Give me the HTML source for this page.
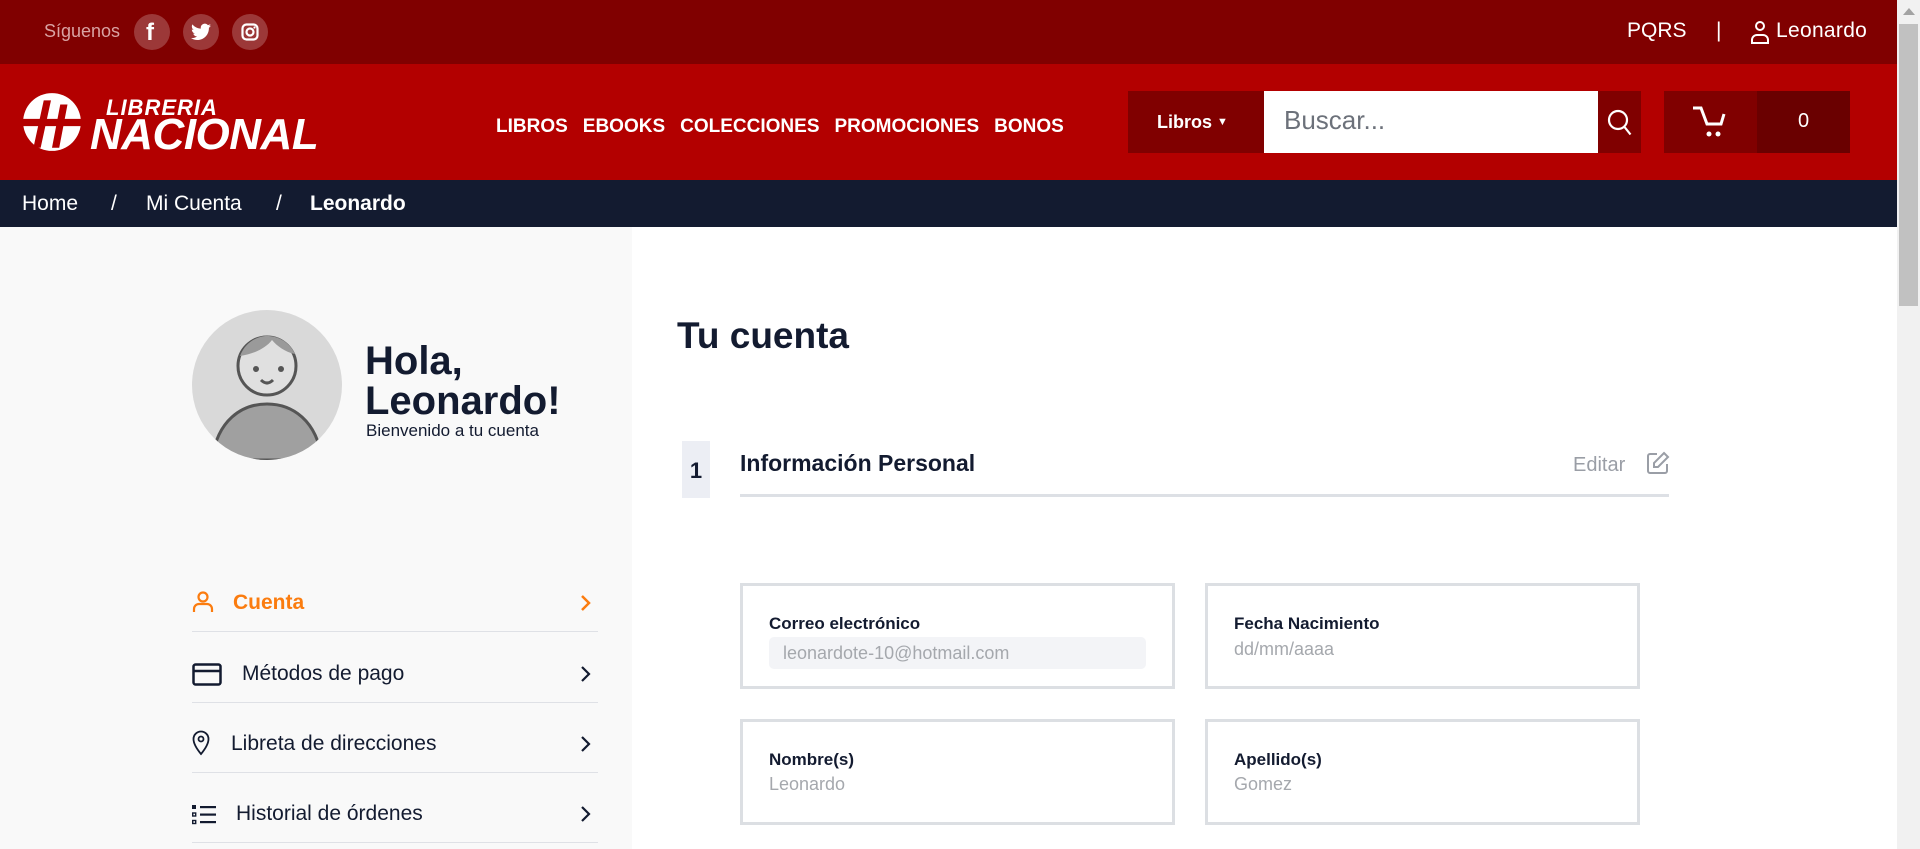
<!DOCTYPE html>
<html><head><meta charset="utf-8"><style>
*{margin:0;padding:0;box-sizing:border-box}
body{width:1920px;height:849px;overflow:hidden;font-family:"Liberation Sans",sans-serif;background:#fff;position:relative;color:#131b30}
.a{position:absolute}
.top{left:0;top:0;width:1897px;height:64px;background:#800000}
.hdr{left:0;top:64px;width:1897px;height:116px;background:#b30000}
.bc{left:0;top:180px;width:1897px;height:47px;background:#131b30;color:#fff;font-size:20px}
.side{left:0;top:227px;width:632px;height:622px;background:#f9f9f9}
.soc{width:36px;height:36px;border-radius:50%;background:rgba(255,255,255,.22);top:14px}
.nav{top:116px;left:496px;color:#fff;font-weight:bold;font-size:19px;white-space:nowrap;letter-spacing:0px}
.nav span{margin-right:15px}
.menu{left:192px;width:406px;height:71px;border-bottom:1.5px solid #dfe1e6;font-size:21px}
.menu .t{position:absolute;top:30px}
.chev{position:absolute;right:6px;top:33px}
.box{border:3px solid #dcdfe3;width:435px;height:106px;background:#fff}
.lbl{position:absolute;left:26px;top:28px;font-size:17px;font-weight:bold;color:#131b30}
.val{position:absolute;left:26px;top:56px;font-size:18px;color:#a5a8ad}
</style></head><body>
<div class="a top"></div>
<div class="a" style="left:44px;top:21px;color:#d9a3a3;font-size:18px">Síguenos</div>
<div class="a soc" style="left:134px"><div class="a" style="left:12px;top:5px;color:#fff;font-weight:bold;font-size:24px">f</div></div>
<div class="a soc" style="left:183px"><svg class="a" style="left:8px;top:9px" width="20" height="18" viewBox="0 0 24 20"><path fill="#fff" d="M24 2.4c-.9.4-1.8.6-2.8.8 1-.6 1.8-1.6 2.200-2.7-1 .6-2 1-3.1 1.2C19.3.7 18 0 16.6 0c-2.7 0-4.9 2.2-4.9 4.9 0 .4 0 .8.1 1.1C7.7 5.8 4.1 3.9 1.7.9c-.4.7-.7 1.6-.7 2.5 0 1.7.9 3.2 2.2 4.1-.8 0-1.6-.2-2.2-.6v.1c0 2.4 1.7 4.4 3.9 4.8-.4.1-.8.2-1.3.2-.3 0-.6 0-.9-.1.6 2 2.4 3.4 4.6 3.4-1.7 1.3-3.8 2.1-6.1 2.1H0c2.2 1.4 4.8 2.2 7.5 2.2 9.1 0 14-7.5 14-14v-.6c1-.7 1.8-1.6 2.5-2.6z"/></svg></div>
<div class="a soc" style="left:232px"><svg class="a" style="left:9px;top:9px" width="18" height="18" viewBox="0 0 18 18"><rect x="1.5" y="1.5" width="15" height="15" rx="4" fill="none" stroke="#fff" stroke-width="2.2"/><circle cx="9" cy="9" r="3.5" fill="none" stroke="#fff" stroke-width="2.2"/><circle cx="13.5" cy="4.5" r="1.1" fill="#fff"/></svg></div>
<div class="a" style="left:1627px;top:19px;color:#fff;font-size:21px">PQRS</div>
<div class="a" style="left:1716px;top:19px;color:#fff;font-size:21px">|</div>
<svg class="a" style="left:1748px;top:19px" width="24" height="26" viewBox="0 0 24 26" fill="none" stroke="#fff" stroke-width="2"><circle cx="12" cy="7" r="4"/><path d="M4 24v-3a5 5 0 0 1 5-5h6a5 5 0 0 1 5 5v3z"/></svg>
<div class="a" style="left:1776px;top:19px;color:#fff;font-size:21px;letter-spacing:0.3px">Leonardo</div>

<div class="a hdr"></div>
<svg class="a" style="left:20px;top:90px" width="64" height="64" viewBox="0 0 60 62"><circle cx="30" cy="31" r="28" fill="#fff"/><path d="M0 28h60v7H0z" fill="#b30000"/><path d="M22 10l-10 46h7l10-46zM38 14l-8 42h7l8-42z" fill="#b30000"/></svg>
<div class="a" style="left:106px;top:95px;color:#fff;font-weight:bold;font-style:italic;font-size:22px;letter-spacing:1px">LIBRERIA</div>
<div class="a" style="left:90px;top:110px;color:#fff;font-weight:bold;font-style:italic;font-size:44px;letter-spacing:-0.5px">NACIONAL</div>
<div class="a nav"><span>LIBROS</span><span>EBOOKS</span><span>COLECCIONES</span><span>PROMOCIONES</span><span style="margin:0">BONOS</span></div>
<div class="a" style="left:1128px;top:91px;width:136px;height:62px;background:#800000;color:#fff;font-weight:bold;font-size:18px;padding:21px 0 0 29px">Libros <span style="font-size:11px;vertical-align:3px">▼</span></div>
<div class="a" style="left:1264px;top:91px;width:334px;height:62px;background:#fff;color:#6c717a;font-size:26px;padding:14px 0 0 20px">Buscar...</div>
<div class="a" style="left:1598px;top:91px;width:43px;height:62px;background:#800000"><svg class="a" style="left:9px;top:18px" width="26" height="28" viewBox="0 0 26 28" fill="none" stroke="#fff" stroke-width="2.2"><circle cx="11" cy="11" r="9"/><path d="M17.5 18l6 7.5"/></svg></div>
<div class="a" style="left:1664px;top:91px;width:93px;height:62px;background:#800000"><svg class="a" style="left:27px;top:14px" width="40" height="34" viewBox="0 0 40 34" fill="none" stroke="#fff" stroke-width="3"><path d="M2 3h8l6 16h14l3-10"/><circle cx="18" cy="29" r="2.5" fill="#fff" stroke="none"/><circle cx="27" cy="29" r="2.5" fill="#fff" stroke="none"/></svg></div>
<div class="a" style="left:1757px;top:91px;width:93px;height:62px;background:#6a0000;color:#fff;font-size:20px;text-align:center;padding-top:19px">0</div>

<div class="a bc"></div>
<div class="a" style="left:22px;top:192px;color:#fff;font-size:21px">Home</div>
<div class="a" style="left:111px;top:192px;color:#fff;font-size:21px">/</div>
<div class="a" style="left:146px;top:192px;color:#fff;font-size:21px">Mi Cuenta</div>
<div class="a" style="left:276px;top:192px;color:#fff;font-size:21px">/</div>
<div class="a" style="left:310px;top:192px;color:#fff;font-size:21px;font-weight:bold">Leonardo</div>

<div class="a side"></div>
<svg class="a" style="left:192px;top:310px" width="150" height="150" viewBox="0 0 150 150"><defs><clipPath id="c"><circle cx="75" cy="75" r="75"/></clipPath></defs><circle cx="75" cy="75" r="75" fill="#d9d9d9"/><g clip-path="url(#c)"><path d="M20 150c5-40 30-56 55-56s50 16 55 56z" fill="#a0a0a0" stroke="#555" stroke-width="3"/><circle cx="75" cy="56" r="29" fill="#e0e0e0" stroke="#555" stroke-width="3"/><path d="M48 46c6-16 20-20 27-20 10 0 22 5 28 18-10-2-18-8-23-14-6 8-18 14-32 16z" fill="#9a9a9a"/><circle cx="64" cy="59" r="3" fill="#555"/><circle cx="89" cy="59" r="3" fill="#555"/><path d="M69 70q6 6 12 0" fill="none" stroke="#555" stroke-width="3"/></g></svg>
<div class="a" style="left:365px;top:341px;font-size:40px;font-weight:bold;line-height:40px">Hola,<br>Leonardo!</div>
<div class="a" style="left:366px;top:421px;font-size:17px">Bienvenido a tu cuenta</div>

<div class="a menu" style="top:561px;color:#fb7c0f"><svg class="a" style="left:0;top:30px" width="22" height="22" viewBox="0 0 22 22" fill="none" stroke="#fb7c0f" stroke-width="2.2"><circle cx="11" cy="6" r="4.5"/><path d="M2 21v-3a5 5 0 0 1 5-5h8a5 5 0 0 1 5 5v3"/></svg><span class="t" style="left:41px;font-weight:bold">Cuenta</span><svg class="chev" width="12" height="18" viewBox="0 0 12 18" fill="none" stroke="#fb7c0f" stroke-width="2.5"><path d="M2 2l7 7-7 7"/></svg></div>
<div class="a menu" style="top:632px"><svg class="a" style="left:0;top:31px" width="30" height="23" viewBox="0 0 30 23" fill="none" stroke="#131b30" stroke-width="2.5"><rect x="1.5" y="1.5" width="27" height="20" rx="2"/><path d="M1.5 8h27"/></svg><span class="t" style="left:50px">Métodos de pago</span><svg class="chev" width="12" height="18" viewBox="0 0 12 18" fill="none" stroke="#131b30" stroke-width="2.2"><path d="M2 2l7 7-7 7"/></svg></div>
<div class="a menu" style="top:702px"><svg class="a" style="left:0;top:28px" width="18" height="26" viewBox="0 0 18 26" fill="none" stroke="#131b30" stroke-width="1.8"><path d="M9 24C4 18 1.5 13 1.5 9a7.5 7.5 0 0 1 15 0c0 4-2.5 9-7.5 15z"/><circle cx="9" cy="9" r="2.5"/></svg><span class="t" style="left:39px">Libreta de direcciones</span><svg class="chev" width="12" height="18" viewBox="0 0 12 18" fill="none" stroke="#131b30" stroke-width="2.2"><path d="M2 2l7 7-7 7"/></svg></div>
<div class="a menu" style="top:772px"><svg class="a" style="left:0;top:33px" width="24" height="20" viewBox="0 0 24 20" fill="#131b30"><rect x="0" y="0" width="4" height="4"/><rect x="0.7" y="8" width="3" height="3" fill="none" stroke="#131b30" stroke-width="1.4"/><rect x="0.7" y="15.5" width="3" height="3" fill="none" stroke="#131b30" stroke-width="1.4"/><rect x="8" y="1" width="16" height="2.2"/><rect x="8" y="8.5" width="16" height="2.2"/><rect x="8" y="16" width="16" height="2.2"/></svg><span class="t" style="left:44px">Historial de órdenes</span><svg class="chev" width="12" height="18" viewBox="0 0 12 18" fill="none" stroke="#131b30" stroke-width="2.2"><path d="M2 2l7 7-7 7"/></svg></div>

<div class="a" style="left:677px;top:315px;font-size:37px;font-weight:bold">Tu cuenta</div>
<div class="a" style="left:682px;top:441px;width:28px;height:57px;background:#eceef4;font-size:22px;font-weight:bold;text-align:center;padding-top:17px">1</div>
<div class="a" style="left:740px;top:450px;font-size:23px;font-weight:bold">Información Personal</div>
<div class="a" style="left:1573px;top:454px;font-size:20px;color:#9a9ea6">Editar</div>
<svg class="a" style="left:1646px;top:451px" width="24" height="24" viewBox="0 0 24 24" fill="none" stroke="#9a9ea6" stroke-width="2"><path d="M11 3H4a2 2 0 0 0-2 2v15a2 2 0 0 0 2 2h15a2 2 0 0 0 2-2v-7"/><path d="M18 2l4 4-10 10H8v-4z"/></svg>
<div class="a" style="left:740px;top:494px;width:929px;height:3px;background:#dde0e5"></div>

<div class="a box" style="left:740px;top:583px"><div class="lbl">Correo electrónico</div><div class="a" style="left:26px;top:51px;width:377px;height:32px;background:#f3f4f7;border-radius:5px"></div><div class="val" style="left:40px;top:57px">leonardote-10@hotmail.com</div></div>
<div class="a box" style="left:1205px;top:583px"><div class="lbl">Fecha Nacimiento</div><div class="val" style="top:53px">dd/mm/aaaa</div></div>
<div class="a box" style="left:740px;top:719px"><div class="lbl">Nombre(s)</div><div class="val" style="top:52px">Leonardo</div></div>
<div class="a box" style="left:1205px;top:719px"><div class="lbl">Apellido(s)</div><div class="val" style="top:52px">Gomez</div></div>

<div class="a" style="left:1897px;top:0;width:23px;height:849px;background:#f1f1f1"></div>
<div class="a" style="left:1899px;top:24px;width:19px;height:282px;background:#c1c1c1"></div>
<div class="a" style="left:1903px;top:8px;width:0;height:0;border-left:6px solid transparent;border-right:6px solid transparent;border-bottom:7px solid #a3a3a3"></div>
</body></html>
